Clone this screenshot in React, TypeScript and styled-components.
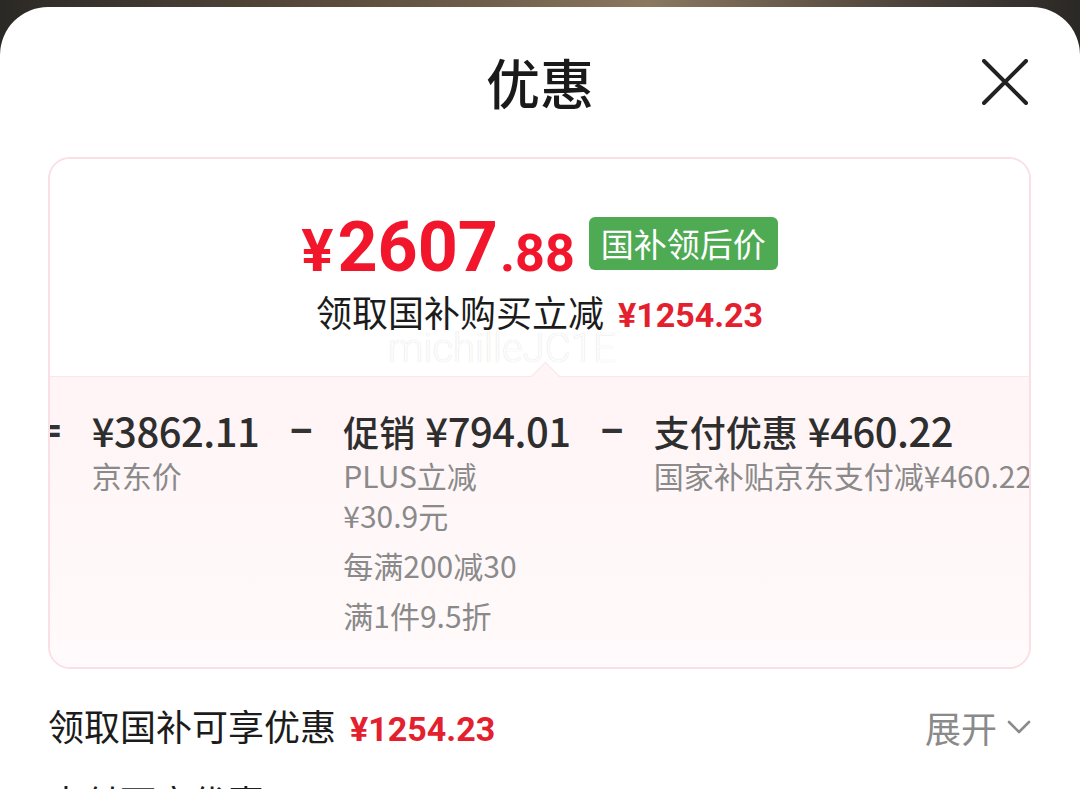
import styled, { createGlobalStyle } from "styled-components";

const GlobalStyle = createGlobalStyle`
    html, body {
        margin: 0;
        padding: 0;
        background: linear-gradient(90deg, #2b2925 0%, #4a3f34 20%, #6f5e4a 45%, #8a7860 60%, #4b4139 85%, #2a2825 100%);
    }
    body {
        font-family: "Noto Sans CJK SC", "Noto Sans", sans-serif;
        overflow: hidden;
    }
`;

type Deal = {
    label?: string;
    amount: string;
    subs: string[];
};

const deals: Deal[] = [
    { amount: "¥3862.11", subs: ["京东价"] },
    { label: "促销", amount: "¥794.01", subs: ["PLUS立减\n¥30.9元", "每满200减30", "满1件9.5折"] },
    { label: "支付优惠", amount: "¥460.22", subs: ["国家补贴京东支付减¥460.22"] },
];

function CloseIcon() {
    return (
        <svg width="46" height="46" viewBox="0 0 46 46">
            <path d="M2 2 L44 44 M44 2 L2 44" stroke="#222" strokeWidth="4" strokeLinecap="round" fill="none"/>
        </svg>
    );
}

function Chevron() {
    return (
        <svg width="24" height="16" viewBox="0 0 24 16">
            <path d="M2 3 L12 13 L22 3" stroke="#8a8a8a" strokeWidth="2.6" strokeLinecap="round" strokeLinejoin="round" fill="none"/>
        </svg>
    );
}

export default function App() {
    return (
        <>
            <GlobalStyle/>
            <Sheet>
                <Header>
                    <span/>
                    <Title>优惠</Title>
                    <CloseButton><CloseIcon/></CloseButton>
                </Header>
                <Card>
                    <Summary>
                        <PriceRow>
                            <BigPrice>
                                <Yen>¥</Yen>2607<Cents>.88</Cents>
                            </BigPrice>
                            <Badge>国补领后价</Badge>
                        </PriceRow>
                        <SaveLine>
                            领取国补购买立减 <RedAmount>¥1254.23</RedAmount>
                        </SaveLine>
                        <Watermark>michilleJC1E</Watermark>
                    </Summary>
                    <Breakdown>
                        <Formula>
                            <Operator>=</Operator>
                            {deals.map((d, i) => (
                                <DealGroup key={d.amount}>
                                    {i > 0 && <Operator>−</Operator>}
                                    <DealItem>
                                        <DealTitle>
                                            {d.label && <DealLabel>{d.label}</DealLabel>}
                                            <DealAmount>{d.amount}</DealAmount>
                                        </DealTitle>
                                        <DealSubs>
                                            {d.subs.map((s) => (
                                                <DealSub key={s}>{s}</DealSub>
                                            ))}
                                        </DealSubs>
                                    </DealItem>
                                </DealGroup>
                            ))}
                        </Formula>
                    </Breakdown>
                </Card>
                <OfferRow>
                    <OfferLabel>
                        领取国补可享优惠 <RedAmount>¥1254.23</RedAmount>
                    </OfferLabel>
                    <Expand>展开 <Chevron/></Expand>
                </OfferRow>
                <OfferRow>
                    <OfferLabel>支付可享优惠</OfferLabel>
                </OfferRow>
            </Sheet>
        </>
    );
}

const Sheet = styled.div`
    margin-top: 7px;
    height: 782px;
    background: #fff;
    border-radius: 48px 48px 0 0;
    overflow: hidden;
`;

const Header = styled.div`
    display: grid;
    grid-template-columns: 1fr auto 1fr;
    align-items: center;
    height: 150px;
    padding-right: 52px;
`;

const Title = styled.div`
    font-size: 54px;
    font-weight: 500;
    color: #1a1a1a;
    line-height: 1;
    padding-left: 52px;
`;

const CloseButton = styled.div`
    justify-self: end;
    display: flex;
`;

const Card = styled.div`
    margin: 0 49px 0 48px;
    height: 512px;
    border: 2px solid #fadfe4;
    border-radius: 22px;
    overflow: hidden;
    display: flex;
    flex-direction: column;
    box-sizing: border-box;
`;

const Summary = styled.div`
    position: relative;
    height: 217px;
    display: flex;
    flex-direction: column;
    align-items: center;
    padding-top: 56px;
    box-sizing: border-box;
    background: #fff;
`;

const PriceRow = styled.div`
    display: flex;
    align-items: center;
    gap: 14px;
    height: 56px;
`;

const BigPrice = styled.div`
    font-family: Roboto, "Noto Sans", sans-serif;
    font-weight: 700;
    font-size: 70px;
    color: #f1162c;
    line-height: 1;
    display: flex;
    align-items: baseline;
    margin-top: 8px;
`;

const Yen = styled.span`
    font-size: 60px;
    margin-right: 4px;
`;

const Cents = styled.span`
    font-size: 52px;
    margin-left: 2px;
`;

const Badge = styled.div`
    background: #4faa54;
    color: #fff;
    font-size: 33px;
    line-height: 53px;
    height: 53px;
    padding: 0 12px;
    border-radius: 6px;
`;

const SaveLine = styled.div`
    margin-top: 18px;
    font-size: 36px;
    line-height: 44px;
    color: #1c1c1c;
`;

const RedAmount = styled.span`
    font-family: Roboto, "Noto Sans", sans-serif;
    font-weight: 700;
    font-size: 34px;
    color: #e4202f;
    margin-left: 6px;
`;

const Watermark = styled.div`
    position: absolute;
    left: 338px;
    top: 170px;
    font-family: Roboto, sans-serif;
    font-weight: 300;
    font-size: 40px;
    line-height: 40px;
    color: rgba(255, 255, 255, 0.95);
    text-shadow: 0 0 1px rgba(0, 0, 0, 0.18);
    pointer-events: none;
`;

const Breakdown = styled.div`
    position: relative;
    flex: 1;
    background: linear-gradient(180deg, #fff4f6 0%, #fffafb 100%);
    border-top: 1px solid #fbe6ea;
    padding-top: 28px;

    &::before {
        content: "";
        position: absolute;
        top: -11px;
        left: 485px;
        width: 20px;
        height: 20px;
        background: #fff4f6;
        border-left: 1px solid #fbe6ea;
        border-top: 1px solid #fbe6ea;
        transform: rotate(45deg);
    }
`;

const Formula = styled.div`
    display: flex;
    align-items: flex-start;
    gap: 30px;
    margin-left: -12px;
    white-space: nowrap;
`;

const DealGroup = styled.div`
    display: flex;
    align-items: flex-start;
    gap: 30px;
`;

const Operator = styled.div`
    font-family: "Noto Sans", sans-serif;
    font-size: 40px;
    font-weight: 700;
    line-height: 50px;
    width: 24px;
    text-align: center;
    color: #333;
`;

const DealItem = styled.div`
    display: flex;
    flex-direction: column;
    flex-shrink: 0;
`;

const DealTitle = styled.div`
    display: flex;
    align-items: baseline;
    gap: 10px;
    height: 50px;
    line-height: 50px;
    color: #2e2e2e;
`;

const DealLabel = styled.span`
    font-size: 36px;
    font-weight: 500;
`;

const DealAmount = styled.span`
    font-size: 40px;
    font-weight: 500;
    letter-spacing: -0.5px;
`;

const DealSubs = styled.div`
    display: flex;
    flex-direction: column;
    gap: 10px;
`;

const DealSub = styled.div`
    font-size: 30px;
    line-height: 40px;
    color: #8a8a8a;
    white-space: pre-line;
`;

const OfferRow = styled.div`
    display: flex;
    align-items: center;
    justify-content: space-between;
    padding: 0 49px 0 48px;
    height: 36px;
    margin-top: 40px;

    & + & {
        margin-top: 38px;
    }
`;

const OfferLabel = styled.div`
    font-size: 36px;
    line-height: 36px;
    color: #1c1c1c;
`;

const Expand = styled.div`
    display: flex;
    align-items: center;
    gap: 10px;
    font-size: 36px;
    line-height: 36px;
    color: #8a8a8a;
`;
